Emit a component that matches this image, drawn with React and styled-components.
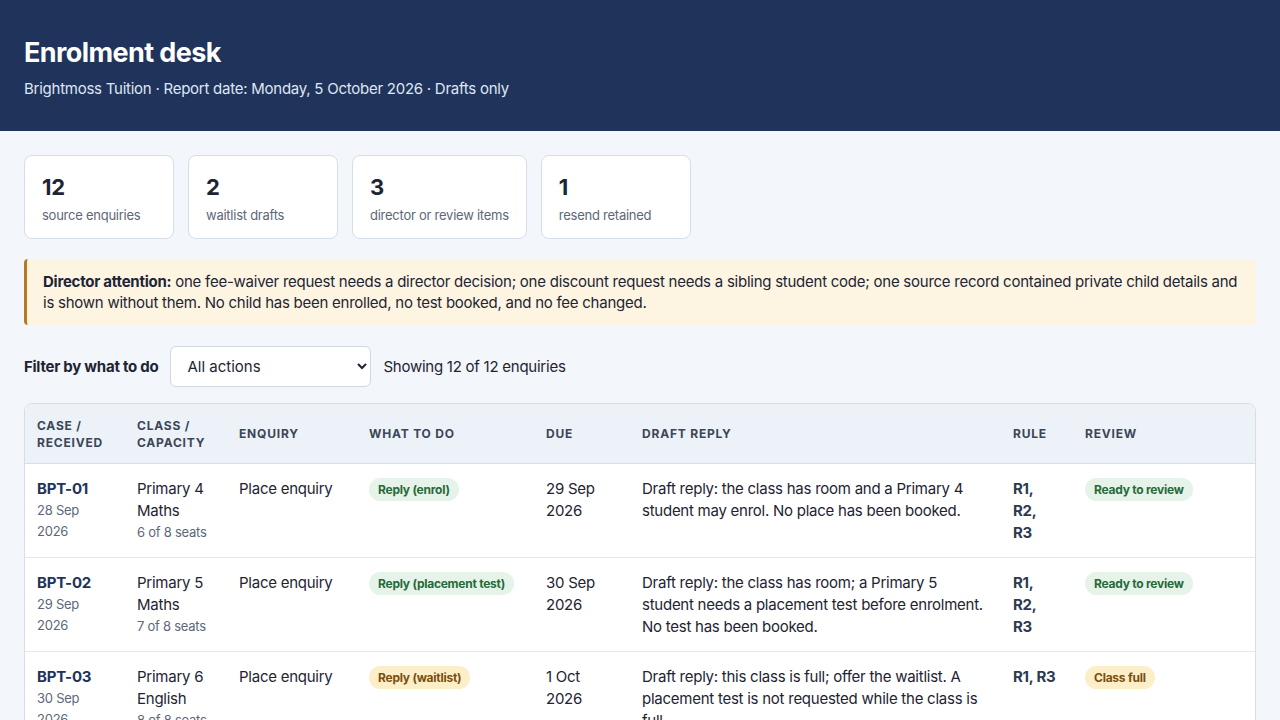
import React from "react";
import styled, { createGlobalStyle } from "styled-components";

const GlobalStyle = createGlobalStyle`
  body {
    margin: 0;
    background: #f3f6fb;
    font-family: Inter, "Noto Sans", sans-serif;
    letter-spacing: -0.25px;
    color: #1d2433;
  }
`;

const stats = [
  { value: "12", label: "source enquiries" },
  { value: "2", label: "waitlist drafts" },
  { value: "3", label: "director or review items" },
  { value: "1", label: "resend retained" },
];

const rows = [
  {
    id: "BPT-01",
    received: "28 Sep 2026",
    klass: "Primary 4 Maths",
    seats: "6 of 8 seats",
    enquiry: "Place enquiry",
    action: "Reply (enrol)",
    actionTone: "green",
    due: "29 Sep 2026",
    draft: "Draft reply: the class has room and a Primary 4 student may enrol. No place has been booked.",
    rule: ["R1,", "R2,", "R3"],
    review: "Ready to review",
    reviewTone: "green",
  },
  {
    id: "BPT-02",
    received: "29 Sep 2026",
    klass: "Primary 5 Maths",
    seats: "7 of 8 seats",
    enquiry: "Place enquiry",
    action: "Reply (placement test)",
    actionTone: "green",
    due: "30 Sep 2026",
    draft: "Draft reply: the class has room; a Primary 5 student needs a placement test before enrolment. No test has been booked.",
    rule: ["R1,", "R2,", "R3"],
    review: "Ready to review",
    reviewTone: "green",
  },
  {
    id: "BPT-03",
    received: "30 Sep 2026",
    klass: "Primary 6 English",
    seats: "8 of 8 seats",
    enquiry: "Place enquiry",
    action: "Reply (waitlist)",
    actionTone: "amber",
    due: "1 Oct 2026",
    draft: "Draft reply: this class is full; offer the waitlist. A placement test is not requested while the class is full.",
    rule: ["R1, R3"],
    review: "Class full",
    reviewTone: "amber",
  },
];

const tones = {
  green: { bg: "#e5f3e8", fg: "#256a3a" },
  amber: { bg: "#fcefc7", fg: "#7b4d0e" },
};

const App = () => (
  <>
    <GlobalStyle />
    <Header>
      <Title>Enrolment desk</Title>
      <Subtitle>Brightmoss Tuition · Report date: Monday, 5 October 2026 · Drafts only</Subtitle>
    </Header>
    <Main>
      <StatRow>
        {stats.map((s) => (
          <StatCard key={s.label}>
            <StatValue>{s.value}</StatValue>
            <StatLabel>{s.label}</StatLabel>
          </StatCard>
        ))}
      </StatRow>
      <Alert>
        <strong>Director attention:</strong> one fee-waiver request needs a director decision; one
        discount request needs a sibling student code; one source record contained private child
        details and is shown without them. No child has been enrolled, no test booked, and no fee
        changed.
      </Alert>
      <FilterRow>
        <FilterLabel>Filter by what to do</FilterLabel>
        <Select defaultValue="all">
          <option value="all">All actions</option>
        </Select>
        <Count>Showing 12 of 12 enquiries</Count>
      </FilterRow>
      <TableWrap>
        <Table>
          <colgroup>
            <col style={{ width: 100 }} />
            <col style={{ width: 102 }} />
            <col style={{ width: 130 }} />
            <col style={{ width: 177 }} />
            <col style={{ width: 96 }} />
            <col style={{ width: 371 }} />
            <col style={{ width: 72 }} />
            <col />
          </colgroup>
          <thead>
            <tr>
              <Th>Case / received</Th>
              <Th>Class / capacity</Th>
              <Th>Enquiry</Th>
              <Th>What to do</Th>
              <Th>Due</Th>
              <Th>Draft reply</Th>
              <Th>Rule</Th>
              <Th>Review</Th>
            </tr>
          </thead>
          <tbody>
            {rows.map((r) => (
              <tr key={r.id}>
                <Td>
                  <CaseId>{r.id}</CaseId>
                  <Sub>{r.received}</Sub>
                </Td>
                <Td>
                  <div>{r.klass}</div>
                  <Sub>{r.seats}</Sub>
                </Td>
                <Td>{r.enquiry}</Td>
                <Td>
                  <Badge $tone={r.actionTone}>{r.action}</Badge>
                </Td>
                <Td>{r.due}</Td>
                <Td>{r.draft}</Td>
                <Td>
                  {r.rule.map((line) => (
                    <Rule key={line + r.id}>{line}</Rule>
                  ))}
                </Td>
                <Td>
                  <Badge $tone={r.reviewTone}>{r.review}</Badge>
                </Td>
              </tr>
            ))}
          </tbody>
        </Table>
      </TableWrap>
    </Main>
  </>
);

const Header = styled.header`
  background: #20335b;
  color: #ffffff;
  padding: 37px 24px 32px;
  height: 62px;
`;

const Title = styled.h1`
  margin: 0;
  font-size: 27px;
  font-weight: 700;
  letter-spacing: -0.6px;
  line-height: 32px;
`;

const Subtitle = styled.p`
  margin: 10px 0 0;
  font-size: 15px;
  color: #dfe6f2;
`;

const Main = styled.main`
  padding: 24px;
`;

const StatRow = styled.div`
  display: flex;
  gap: 14px;
`;

const StatCard = styled.div`
  background: #ffffff;
  border: 1px solid #d6dee9;
  border-radius: 8px;
  padding: 17px 17px 15px;
  min-width: 114px;
`;

const StatValue = styled.div`
  font-size: 22px;
  font-weight: 700;
  line-height: 28px;
`;

const StatLabel = styled.div`
  margin-top: 6px;
  font-size: 13px;
  color: #5d6778;
`;

const Alert = styled.div`
  margin-top: 20px;
  background: #fdf5e2;
  border-left: 3px solid #b7791f;
  border-radius: 4px;
  padding: 12px 16px;
  font-size: 15px;
  line-height: 21px;
  color: #1d2433;
`;

const FilterRow = styled.div`
  display: flex;
  align-items: center;
  gap: 12px;
  margin-top: 21px;
`;

const FilterLabel = styled.span`
  font-size: 15px;
  font-weight: 700;
`;

const Select = styled.select`
  width: 201px;
  height: 41px;
  padding: 0 12px;
  font-family: inherit;
  font-size: 15px;
  color: #1d2433;
  background: #ffffff;
  border: 1px solid #cfd8e4;
  border-radius: 6px;
`;

const Count = styled.span`
  font-size: 15px;
`;

const TableWrap = styled.div`
  margin-top: 16px;
  background: #ffffff;
  border: 1px solid #d6dee9;
  border-radius: 8px;
  overflow: hidden;
`;

const Table = styled.table`
  width: 100%;
  border-collapse: collapse;
  table-layout: fixed;
`;

const Th = styled.th`
  background: #edf2f8;
  text-align: left;
  font-size: 12px;
  font-weight: 700;
  letter-spacing: 0.8px;
  text-transform: uppercase;
  color: #3b4657;
  padding: 12px;
  height: 35px;
  line-height: 17px;
  border-bottom: 1px solid #d6dee9;
`;

const Td = styled.td`
  vertical-align: top;
  padding: 14px 12px 13px;
  font-size: 15px;
  line-height: 22px;
  border-bottom: 1px solid #e2e8f0;
`;

const CaseId = styled.div`
  font-weight: 700;
  color: #20335b;
`;

const Sub = styled.div`
  font-size: 13px;
  line-height: 21px;
  color: #5d6778;
`;

const Rule = styled.div`
  font-weight: 700;
  color: #2d3a50;
`;

const Badge = styled.span`
  display: inline-block;
  padding: 3px 9px;
  border-radius: 999px;
  font-size: 12px;
  font-weight: 700;
  line-height: 17px;
  background: ${(p) => tones[p.$tone].bg};
  color: ${(p) => tones[p.$tone].fg};
`;

export default App;
